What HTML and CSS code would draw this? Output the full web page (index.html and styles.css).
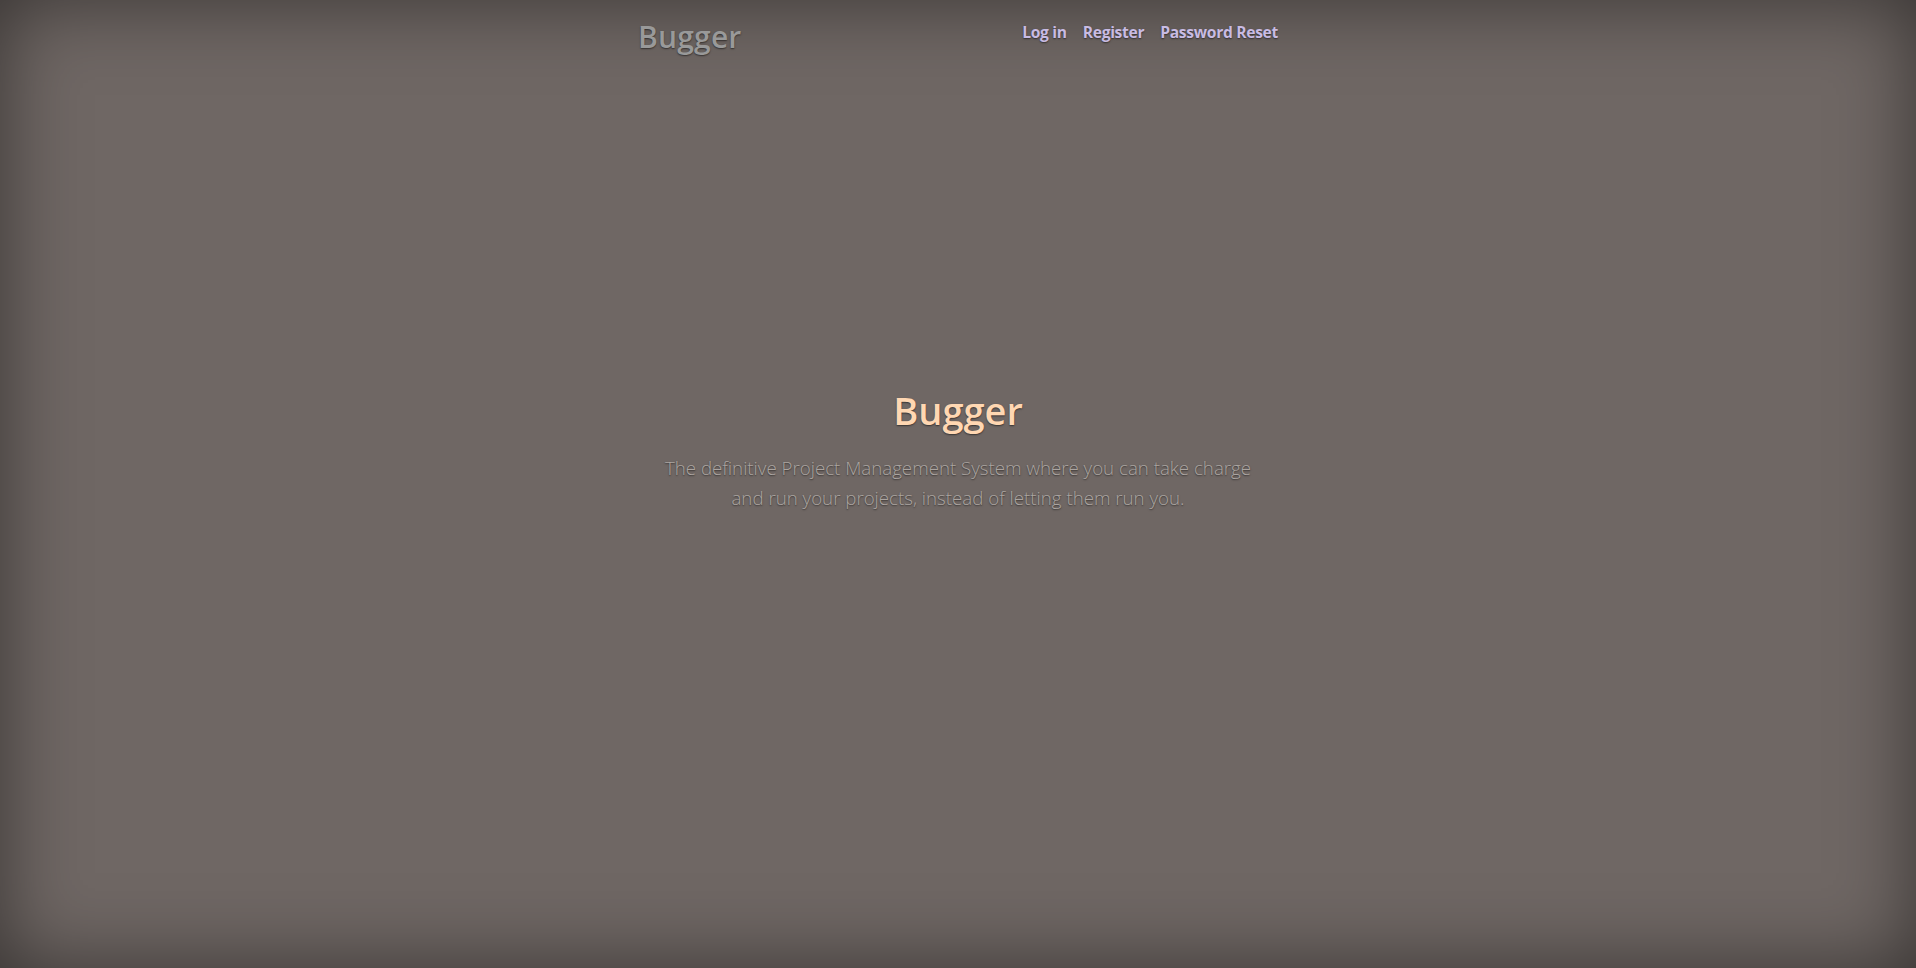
FILE: index.html
```html
<!DOCTYPE html>
<html lang="en">
<head>
<meta charset="utf-8">
<title>Bugger</title>
<link rel="stylesheet" href="styles.css">
</head>
<body>
<div class="cover-container">
  <header class="masthead">
    <h3 class="masthead-brand">Bugger</h3>
    <nav class="nav-masthead">
      <a class="nav-link" href="#">Log in</a>
      <a class="nav-link" href="#">Register</a>
      <a class="nav-link" href="#">Password Reset</a>
    </nav>
  </header>
  <main class="cover">
    <h1 class="cover-heading">Bugger</h1>
    <p class="lead">The definitive Project Management System where you can take charge<br>and run your projects, instead of letting them run you.</p>
  </main>
  <footer class="mastfoot"></footer>
</div>
</body>
</html>
```
FILE: styles.css
```css
html, body {
  height: 100%;
}
body {
  margin: 0;
  background-color: #6f6764;
  box-shadow: inset 0 0 5rem rgba(0, 0, 0, .5);
  font-family: "Open Sans", "Noto Sans", sans-serif;
  color: #fff;
  text-shadow: 0 .05rem .1rem rgba(0, 0, 0, .5);
  display: flex;
  text-align: center;
}
.cover-container {
  box-sizing: border-box;
  width: 100%;
  max-width: 672px;
  height: 100%;
  margin: 0 auto;
  padding: 16px;
  display: flex;
  flex-direction: column;
}
.masthead {
  display: flex;
  justify-content: space-between;
  align-items: flex-start;
  margin-bottom: auto;
}
.masthead-brand {
  margin: 3px 0 0;
  font-size: 30px;
  font-weight: 600;
  line-height: 1.2;
  color: #999999;
  letter-spacing: 0.2px;
}
.nav-masthead {
  display: flex;
  gap: 16px;
  padding-top: 1px;
}
.nav-link {
  font-size: 15.6px;
  font-weight: 700;
  color: #c8bbe3;
  text-decoration: none;
  padding: 4px 0;
  letter-spacing: -0.3px;
}
.cover {
  padding: 0 24px;
}
.cover-heading {
  margin: 0 0 19px;
  font-size: 38px;
  font-weight: 600;
  line-height: 1.2;
  color: #ffd7b2;
}
.lead {
  margin: 0 0 16px;
  font-size: 18.7px;
  font-weight: 300;
  line-height: 30px;
  color: #aba5a1;
}
.mastfoot {
  margin-top: auto;
  height: 90px;
}
```
